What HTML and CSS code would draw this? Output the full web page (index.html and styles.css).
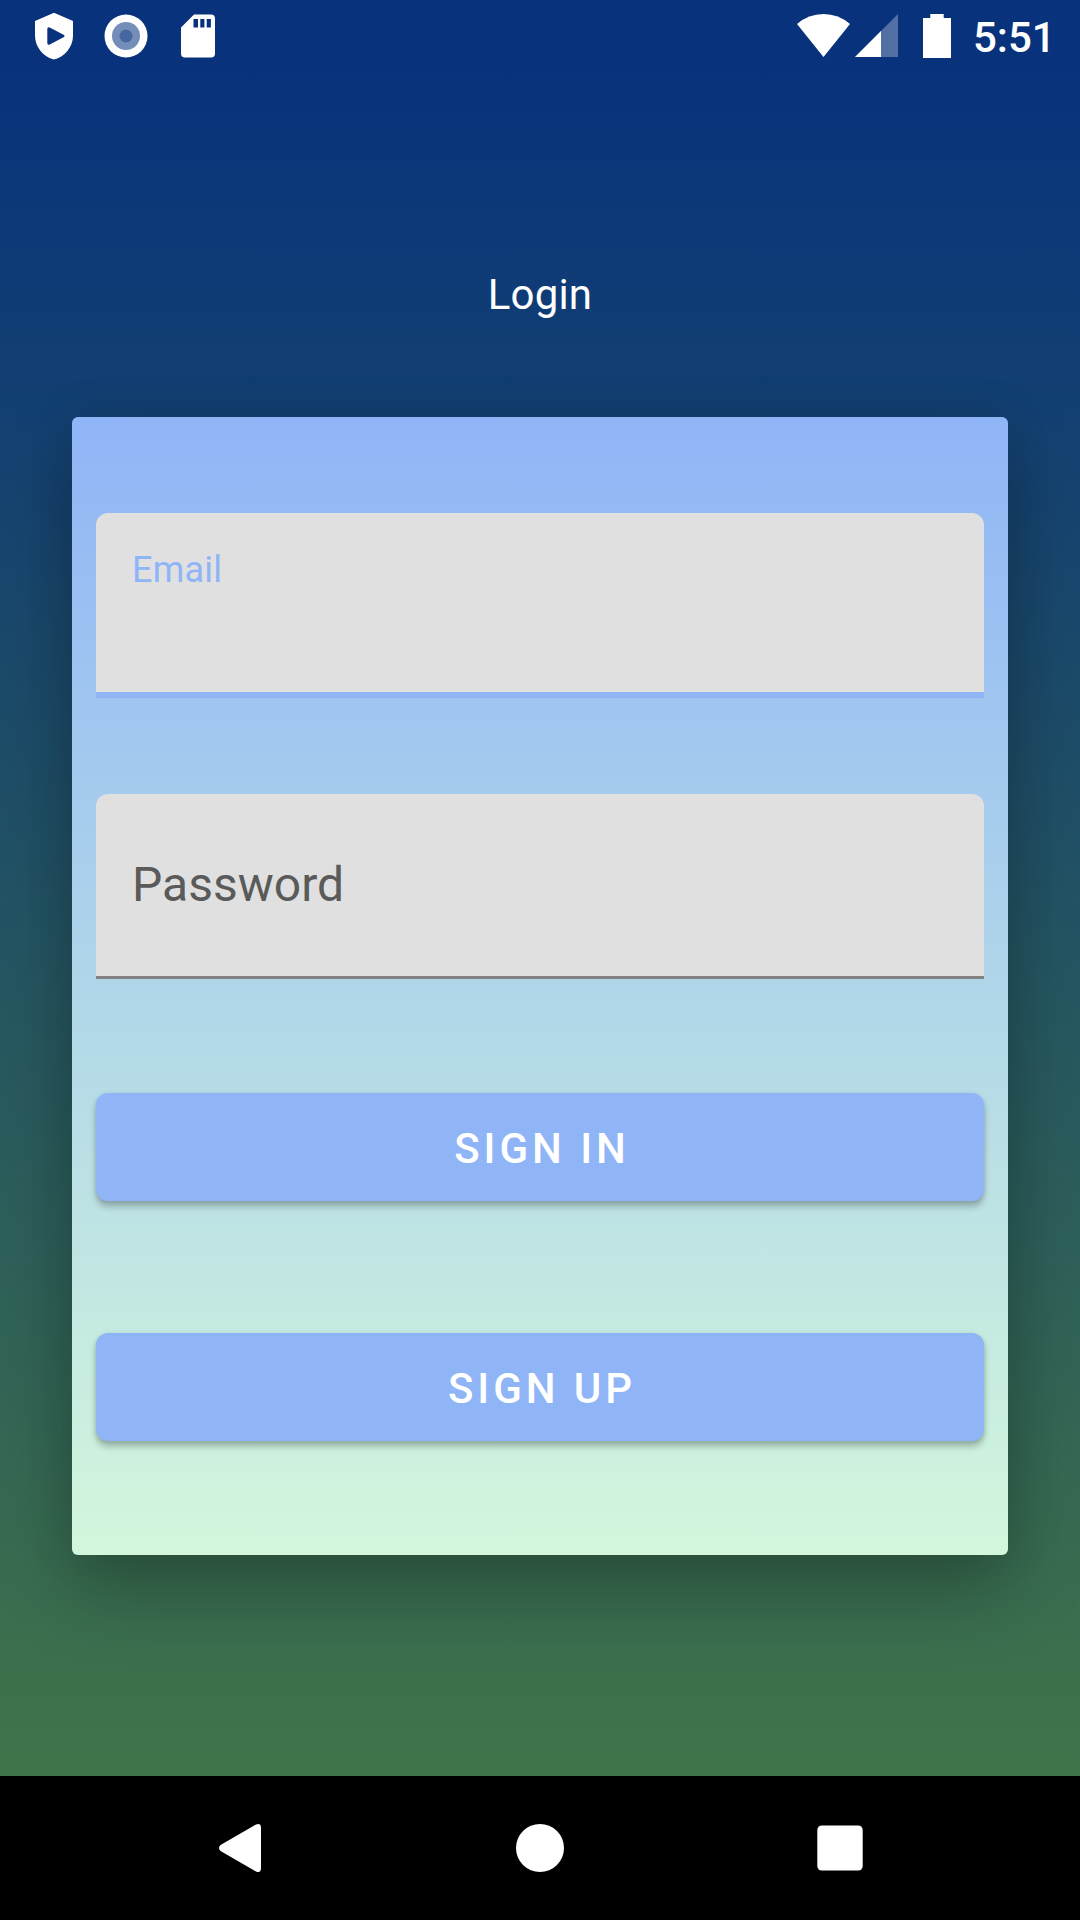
FILE: index.html
```html
<!DOCTYPE html>
<html lang="en">
<head>
<meta charset="utf-8">
<title>Login</title>
<link rel="stylesheet" href="styles.css">
</head>
<body>
<div class="screen">
  <header class="status-bar">
    <svg class="status-icons" width="190" height="72" viewBox="30 0 190 72" fill="#fff" aria-hidden="true">
      <path fill-rule="evenodd" d="M54 12.700 73 21V35.500C73 47 65 56.500 54 59.600 43 56.500 35 47 35 35.500V21ZM47.300 29V43Q47.300 45.500 49.700 44.500L64 36.900Q65.300 36 64 35.100L49.700 27.500Q47.300 26.500 47.300 29Z"/>
      <circle cx="126" cy="36" r="21.500"/>
      <circle cx="126" cy="36" r="14" fill="#748eb9"/>
      <circle cx="126" cy="36" r="6.500" fill="#46669f"/>
      <path fill-rule="evenodd" d="M194 14.500H211Q215 14.500 215 18.500V53.500Q215 57.500 211 57.500H185Q181 57.500 181 53.500V27.500ZM193.500 19V27.500H198V19ZM200.300 19V27.500H204.400V19ZM206.700 19V27.500H210.900V19Z"/>
    </svg>
    <div class="status-right">
      <svg width="160" height="72" viewBox="795 0 160 72" fill="#fff" aria-hidden="true">
        <path d="M823.500 57 797 24Q808.500 14 823.500 14T850 24Z"/>
        <path d="M898 14V57H855Z" opacity=".3"/>
        <path d="M881 31V57H855Z"/>
        <path d="M930.300 18V14H943.700V18H951V58H923V18Z"/>
      </svg>
      <span class="clock">5:51</span>
    </div>
  </header>
  <main class="content">
    <h1 class="title">Login</h1>
    <form class="card">
      <label class="field field-active"><span class="label-small">Email</span></label>
      <label class="field"><span class="label-large">Password</span></label>
      <button class="button" type="button">SIGN IN</button>
      <button class="button button-second" type="button">SIGN UP</button>
    </form>
  </main>
</div>
<nav class="nav-bar">
  <svg width="60" height="60" viewBox="210 1818 60 60" fill="#fff" aria-hidden="true"><path d="M220.500 1845 256 1824.600Q261 1822.500 261 1828V1868Q261 1873.500 256 1871.400L220.500 1851Q217.500 1848 220.500 1845Z"/></svg>
  <svg width="60" height="60" viewBox="0 0 60 60" fill="#fff" aria-hidden="true"><circle cx="30" cy="30" r="24"/></svg>
  <svg width="60" height="60" viewBox="0 0 60 60" fill="#fff" aria-hidden="true"><rect x="7.300" y="7.500" width="45.400" height="45" rx="4.500"/></svg>
</nav>
</body>
</html>
```
FILE: styles.css
```css
* { box-sizing: border-box; }

body {
  margin: 0;
  width: 1080px;
  height: 1920px;
  overflow: hidden;
  display: flex;
  flex-direction: column;
  background: #000;
  color: #fff;
  font-family: Roboto, sans-serif;
}

.screen {
  height: 1776px;
  overflow: hidden;
  background: linear-gradient(#08337c 0, #08337c 72px, #3f744a 100%);
}

.status-bar {
  height: 72px;
  display: flex;
  justify-content: space-between;
  padding: 0 28px 0 30px;
}

.status-right { display: flex; }

.clock {
  width: 97px;
  padding-left: 18px;
  font-size: 42px;
  font-weight: 500;
  line-height: 75px;
}

.title {
  margin: 198px 0 98px;
  font-size: 42px;
  font-weight: 400;
  line-height: 49px;
  letter-spacing: .2px;
  text-align: center;
}

.card {
  width: 936px;
  height: 1138px;
  margin: 0 auto;
  padding: 96px 24px 0;
  display: flex;
  flex-direction: column;
  border-radius: 6px;
  background: linear-gradient(#8fb5f7, #d2f7dc);
  box-shadow: 0 36px 76px rgba(0, 0, 0, .26), 0 0 50px rgba(0, 0, 0, .09);
}

.field {
  height: 185px;
  margin-bottom: 96px;
  padding: 0 36px;
  border-radius: 12px 12px 0 0;
  background: linear-gradient(#828282, #828282) bottom / 100% 3px no-repeat #e0e0e0;
}

.field-active {
  background: linear-gradient(#8fb5f7, #8fb5f7) bottom / 100% 6px no-repeat #e0e0e0;
}

.label-small,
.label-large { display: block; }

.label-small {
  padding-top: 36px;
  color: #8fb5f7;
  font-size: 36px;
  line-height: 42px;
  letter-spacing: .2px;
}

.label-large {
  padding-top: 63px;
  color: #5a5a5a;
  font-size: 48px;
  line-height: 56px;
}

.button {
  height: 108px;
  margin: 18px 0 0;
  padding: 3px 0 0 4px;
  border: 0;
  border-radius: 12px;
  background: #8fb5f7;
  box-shadow: 0 6px 6px rgba(0, 0, 0, .22), 0 1px 5px rgba(0, 0, 0, .12);
  color: #fff;
  font: 500 42px/49px Roboto, sans-serif;
  letter-spacing: 3.95px;
}

.button-second { margin-top: 132px; }

.nav-bar {
  height: 144px;
  padding: 0 210px;
  display: flex;
  align-items: center;
  justify-content: space-between;
}
```
